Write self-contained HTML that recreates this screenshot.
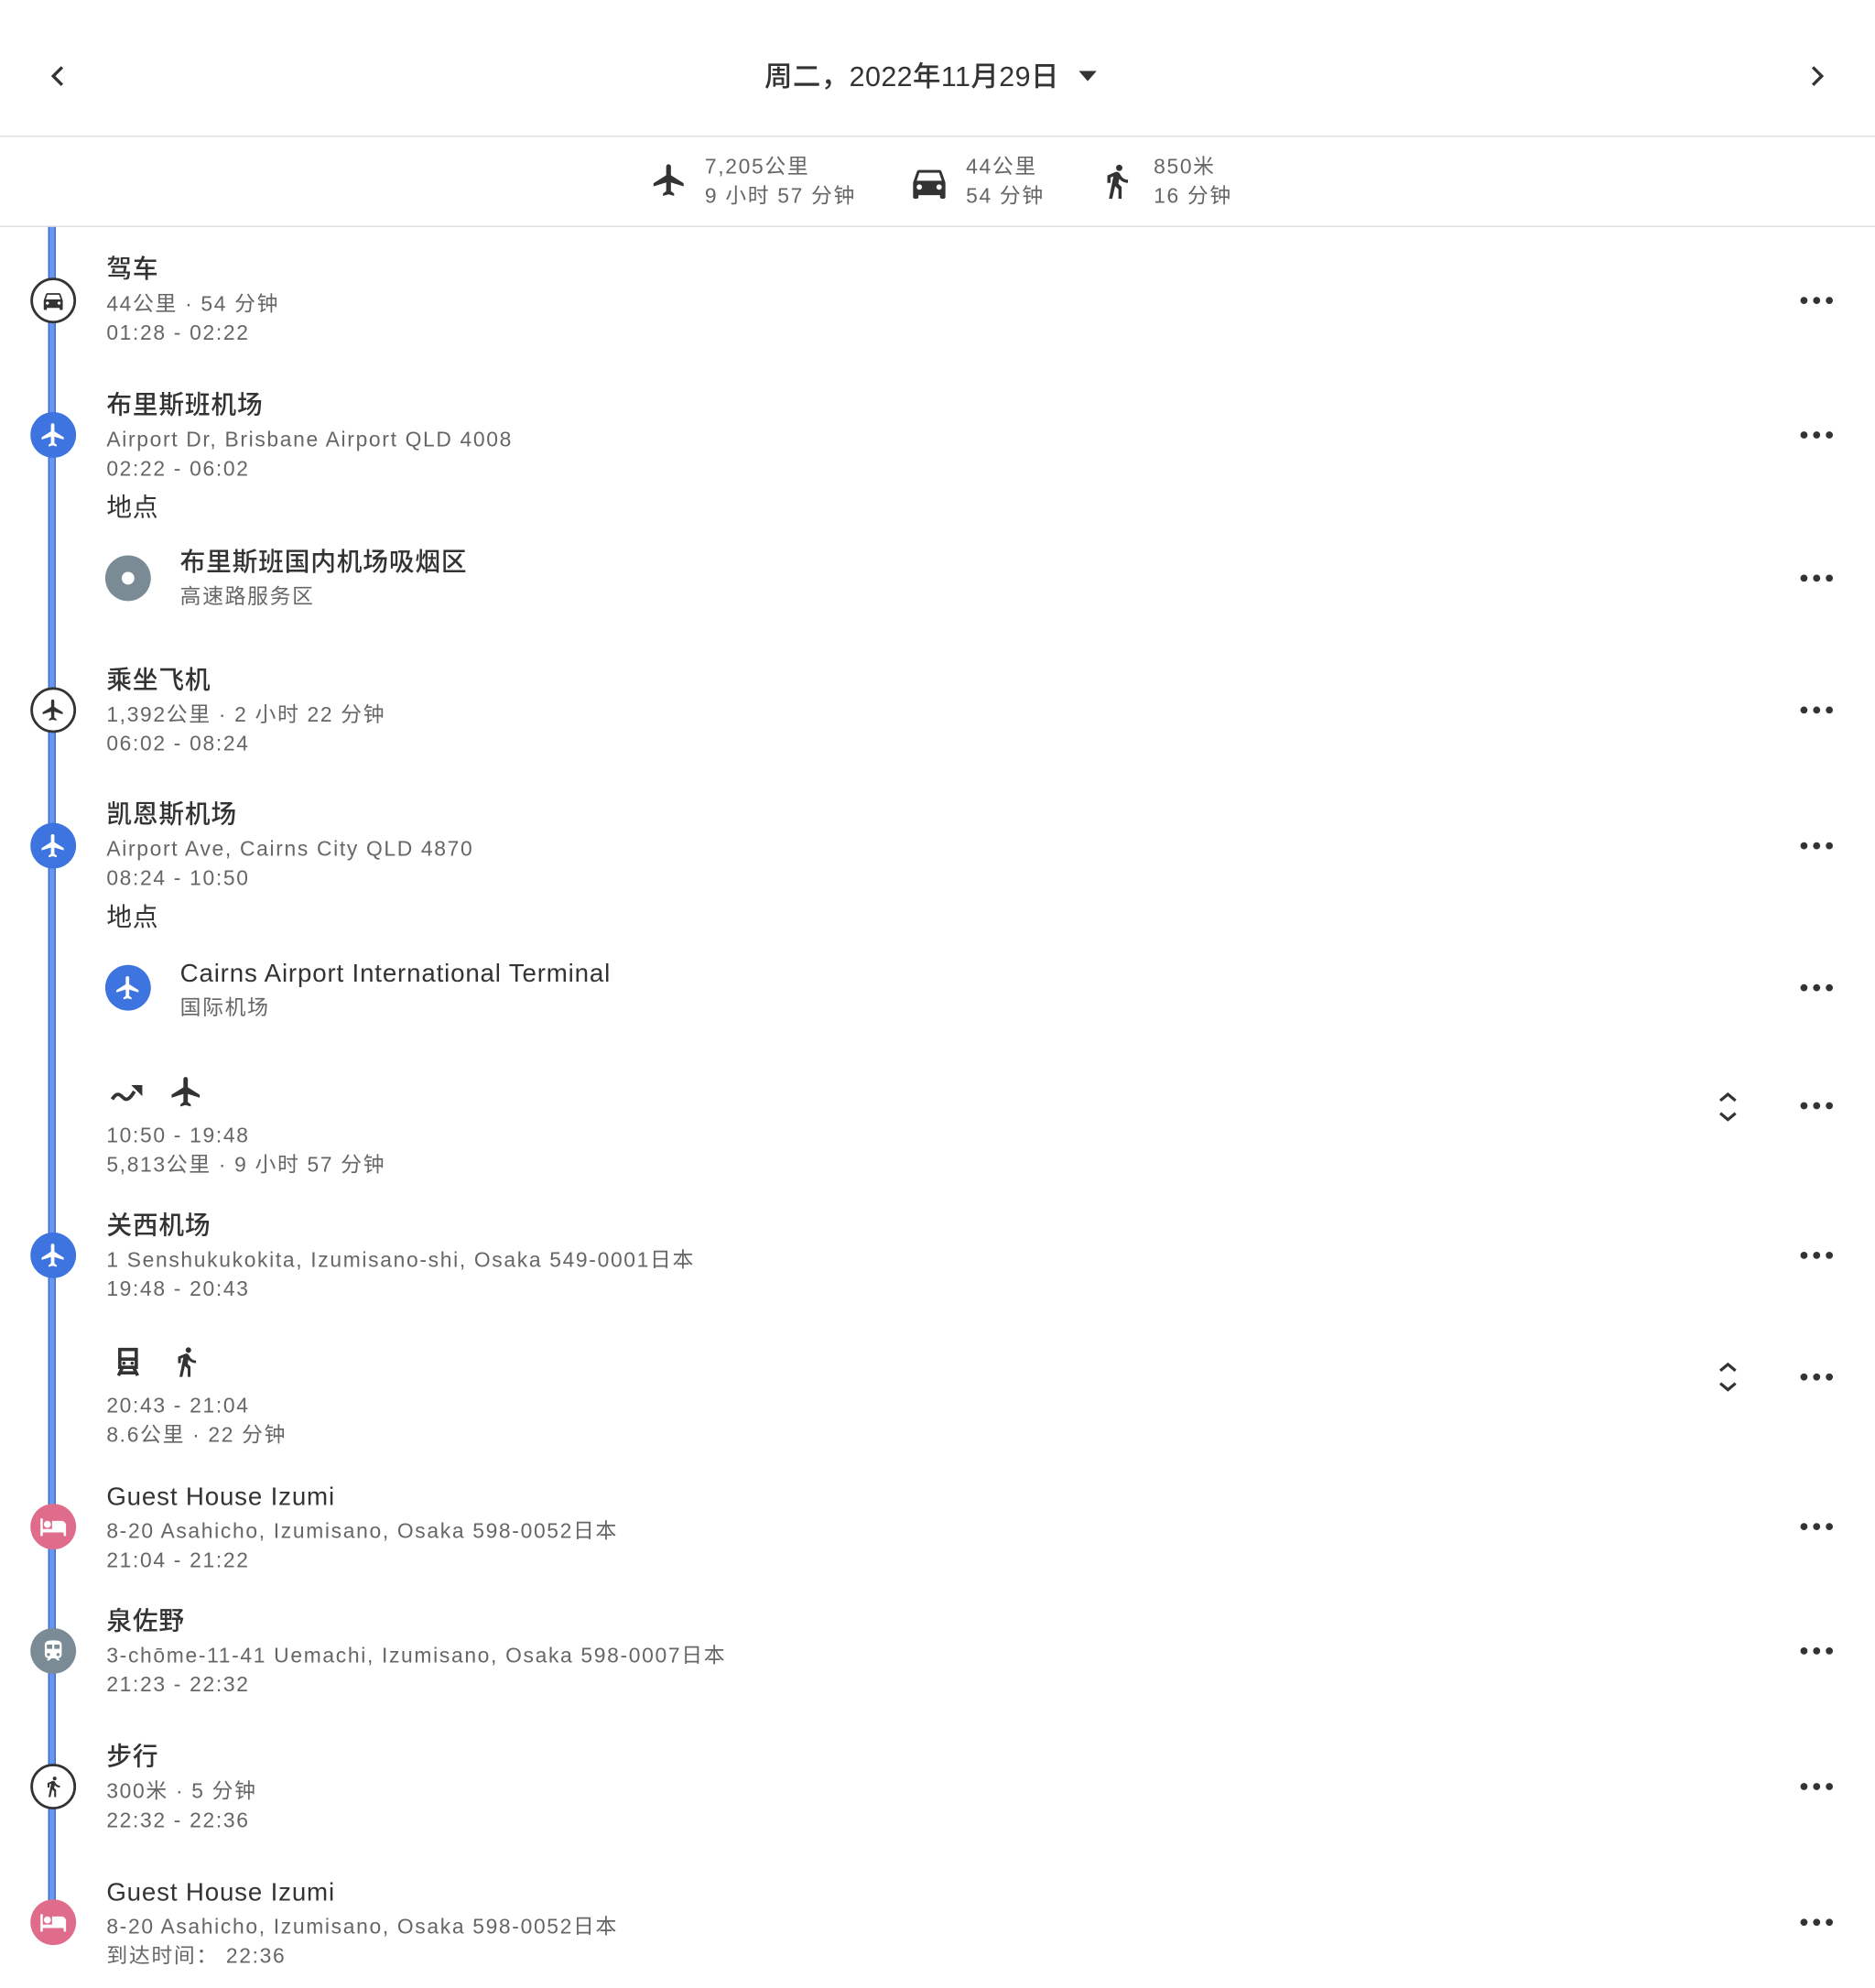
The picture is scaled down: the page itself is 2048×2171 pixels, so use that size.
<!DOCTYPE html>
<html><head><meta charset="utf-8"><style>
html,body{margin:0;padding:0;background:#fff;width:2048px;height:2171px;overflow:hidden}
#c{position:absolute;left:0;top:0;width:1479px;height:1568px;transform:scale(1.3847);transform-origin:0 0;font-family:"Liberation Sans","Noto Sans CJK SC",sans-serif}
.a{position:absolute;white-space:nowrap;line-height:24px}
.t{font-size:20px;color:#333;font-weight:500;left:84px;letter-spacing:.6px;margin-top:1px}
.s{font-size:16.5px;color:#666;letter-spacing:1.2px;left:84px;margin-top:1px}
.ic{position:absolute;width:36px;height:36px;border-radius:50%;box-sizing:border-box;display:flex;align-items:center;justify-content:center}
.o{background:#fff;border:2.5px solid #333}
.b{background:#3e74e0}
.p{background:#e06c8c}
.g{background:#7a8b95}
.dots{position:absolute;left:1420px;width:26px;height:6px}
.hl{position:absolute;left:0;width:1479px;height:1px;background:#ddd}
</style></head><body><div id="c">
<svg class="a" style="left:36px;top:50px" width="20" height="20" viewBox="0 0 20 20"><path d="M13 3L6 10l7 7" fill="none" stroke="#333" stroke-width="2.4"/></svg>
<div class="a" style="left:603px;top:47px;font-size:22px;line-height:28px;color:#333;font-weight:500;letter-spacing:.3px">周二，2022年11月29日</div>
<svg class="a" style="left:850px;top:55px" width="16" height="10"><path d="M1 1h14L8 9z" fill="#333"/></svg>
<svg class="a" style="left:1423px;top:50px" width="20" height="20" viewBox="0 0 20 20"><path d="M7 3l7 7-7 7" fill="none" stroke="#333" stroke-width="2.4"/></svg>
<div class="hl" style="top:107px"></div>
<svg class="a" style="left:513px;top:127px" width="30" height="30" viewBox="0 0 24 24"><path fill="#333" d="M21 16v-2l-8-5V3.5c0-.83-.67-1.5-1.5-1.5S10 2.67 10 3.5V9l-8 5v2l8-2.5V19l-2 1.5V22l3.5-1 3.5 1v-1.5L13 19v-5.5l8 2.5z"/></svg>
<div class="a s" style="left:556px;top:119px">7,205公里</div>
<div class="a s" style="left:556px;top:142px">9 小时 57 分钟</div>
<svg class="a" style="left:716px;top:127px" width="34" height="34" viewBox="0 0 24 24"><path fill="#333" d="M18.92 6.01C18.72 5.420 18.160 5 17.5 5h-11c-.66 0-1.21.42-1.42 1.01L3 12v8c0 .55.45 1 1 1h1c.55 0 1-.45 1-1v-1h12v1c0 .55.45 1 1 1h1c.55 0 1-.45 1-1v-8l-2.08-5.99zM6.5 16c-.83 0-1.5-.67-1.5-1.5S5.67 13 6.5 13s1.5.67 1.5 1.5S7.33 16 6.5 16zm11 0c-.83 0-1.5-.67-1.5-1.5s.67-1.5 1.5-1.5 1.5.67 1.5 1.5-.67 1.5-1.5 1.5zM5 11l1.5-4.5h11L19 11H5z"/></svg>
<div class="a s" style="left:762px;top:119px">44公里</div>
<div class="a s" style="left:762px;top:142px">54 分钟</div>
<svg class="a" style="left:866px;top:127px" width="30" height="32" viewBox="0 0 24 24"><path fill="#333" d="M13.5 5.5c1.1 0 2-.9 2-2s-.9-2-2-2-2 .9-2 2 .9 2 2 2zM9.8 8.9L7 23h2.1l1.8-8 2.1 2v6h2v-7.5l-2.1-2 .6-3C14.8 12 16.8 13 19 13v-2c-1.9 0-3.5-1-4.3-2.4l-1-1.6c-.4-.6-1-1-1.7-1-.3 0-.5.1-.8.1L6 8.3V13h2V9.6l1.8-.7"/></svg>
<div class="a s" style="left:910px;top:119px">850米</div>
<div class="a s" style="left:910px;top:142px">16 分钟</div>
<div class="hl" style="top:178px"></div>
<div style="position:absolute;left:38px;top:179px;width:6px;height:1337px;background:#6a97ee;border-left:1.5px solid #3a6ad6;border-right:1.5px solid #3a6ad6;box-sizing:border-box"></div>

<div class="ic o" style="left:24px;top:219px"><svg width="20" height="20" viewBox="0 0 24 24"><path fill="#333" d="M18.92 6.01C18.72 5.42 18.16 5 17.5 5h-11c-.66 0-1.21.42-1.42 1.01L3 12v8c0 .55.45 1 1 1h1c.55 0 1-.45 1-1v-1h12v1c0 .55.45 1 1 1h1c.55 0 1-.45 1-1v-8l-2.08-5.99zM6.5 16c-.83 0-1.5-.67-1.5-1.5S5.67 13 6.5 13s1.5.67 1.5 1.5S7.33 16 6.5 16zm11 0c-.83 0-1.5-.67-1.5-1.5s.67-1.5 1.5-1.5 1.5.67 1.5 1.5-.67 1.5-1.5 1.5zM5 11l1.5-4.5h11L19 11H5z"/></svg></div>
<div class="a t" style="top:200px">驾车</div>
<div class="a s" style="top:227px">44公里 · 54 分钟</div>
<div class="a s" style="top:250px">01:28 - 02:22</div>

<div class="ic b" style="left:24px;top:325px"><svg width="22" height="22" viewBox="0 0 24 24"><path fill="#fff" d="M21 16v-2l-8-5V3.5c0-.83-.67-1.5-1.5-1.5S10 2.67 10 3.5V9l-8 5v2l8-2.5V19l-2 1.5V22l3.5-1 3.5 1v-1.5L13 19v-5.5l8 2.5z"/></svg></div>
<div class="a t" style="top:307px">布里斯班机场</div>
<div class="a s" style="top:334px">Airport Dr, Brisbane Airport QLD 4008</div>
<div class="a s" style="top:357px">02:22 - 06:02</div>
<div class="a t" style="top:388px;font-weight:400">地点</div>
<div class="ic g" style="left:83px;top:438px"><div style="width:10px;height:10px;border-radius:50%;background:#fff"></div></div>
<div class="a t" style="left:142px;top:431px">布里斯班国内机场吸烟区</div>
<div class="a s" style="left:142px;top:458px">高速路服务区</div>

<div class="ic o" style="left:24px;top:542px"><svg width="20" height="20" viewBox="0 0 24 24"><path fill="#333" d="M21 16v-2l-8-5V3.5c0-.83-.67-1.5-1.5-1.5S10 2.67 10 3.5V9l-8 5v2l8-2.5V19l-2 1.5V22l3.5-1 3.5 1v-1.5L13 19v-5.5l8 2.5z"/></svg></div>
<div class="a t" style="top:524px">乘坐飞机</div>
<div class="a s" style="top:551px">1,392公里 · 2 小时 22 分钟</div>
<div class="a s" style="top:574px">06:02 - 08:24</div>

<div class="ic b" style="left:24px;top:649px"><svg width="22" height="22" viewBox="0 0 24 24"><path fill="#fff" d="M21 16v-2l-8-5V3.5c0-.83-.67-1.5-1.5-1.5S10 2.67 10 3.5V9l-8 5v2l8-2.5V19l-2 1.5V22l3.5-1 3.5 1v-1.5L13 19v-5.5l8 2.5z"/></svg></div>
<div class="a t" style="top:630px">凯恩斯机场</div>
<div class="a s" style="top:657px">Airport Ave, Cairns City QLD 4870</div>
<div class="a s" style="top:680px">08:24 - 10:50</div>
<div class="a t" style="top:711px;font-weight:400">地点</div>
<div class="ic b" style="left:83px;top:761px"><svg width="22" height="22" viewBox="0 0 24 24"><path fill="#fff" d="M21 16v-2l-8-5V3.5c0-.83-.67-1.5-1.5-1.5S10 2.67 10 3.5V9l-8 5v2l8-2.5V19l-2 1.5V22l3.5-1 3.5 1v-1.5L13 19v-5.5l8 2.5z"/></svg></div>
<div class="a t" style="left:142px;top:755px">Cairns Airport International Terminal</div>
<div class="a s" style="left:142px;top:782px">国际机场</div>

<svg class="a" style="left:86px;top:847px" width="30" height="30" viewBox="0 0 24 24"><path d="M2 16c3-5 5-3 7-1s4 1 7-4" fill="none" stroke="#333" stroke-width="2.2"/><path fill="#333" d="M14 7h7v7l-2.5-2.5z"/></svg>
<svg class="a" style="left:133px;top:847px" width="28" height="28" viewBox="0 0 24 24"><path fill="#333" d="M21 16v-2l-8-5V3.5c0-.83-.67-1.5-1.5-1.5S10 2.67 10 3.5V9l-8 5v2l8-2.5V19l-2 1.5V22l3.5-1 3.5 1v-1.5L13 19v-5.5l8 2.5z"/></svg>
<div class="a s" style="top:883px">10:50 - 19:48</div>
<div class="a s" style="top:906px">5,813公里 · 9 小时 57 分钟</div>
<svg class="a" style="left:1354px;top:860px" width="18" height="26"><path d="M3 8l6-5 6 5M3 18l6 5 6-5" fill="none" stroke="#333" stroke-width="2.3"/></svg>

<div class="ic b" style="left:24px;top:972px"><svg width="22" height="22" viewBox="0 0 24 24"><path fill="#fff" d="M21 16v-2l-8-5V3.5c0-.83-.67-1.5-1.5-1.5S10 2.67 10 3.5V9l-8 5v2l8-2.5V19l-2 1.5V22l3.5-1 3.5 1v-1.5L13 19v-5.5l8 2.5z"/></svg></div>
<div class="a t" style="top:954px">关西机场</div>
<div class="a s" style="top:981px">1 Senshukukokita, Izumisano-shi, Osaka 549-0001日本</div>
<div class="a s" style="top:1004px">19:48 - 20:43</div>

<svg class="a" style="left:88px;top:1061px" width="26" height="26" viewBox="0 0 24 24"><path fill="none" stroke="#333" stroke-width="2.4" d="M6 3h12v13H6z M6 10h12"/><circle cx="9" cy="13" r="1.2" fill="#333"/><circle cx="15" cy="13" r="1.2" fill="#333"/><path d="M8 16l-3 6M16 16l3 6M6.5 20h11" stroke="#333" stroke-width="2.4" fill="none"/></svg>
<svg class="a" style="left:134px;top:1060px" width="26" height="28" viewBox="0 0 24 24"><path fill="#333" d="M13.5 5.5c1.1 0 2-.9 2-2s-.9-2-2-2-2 .9-2 2 .9 2 2 2zM9.8 8.9L7 23h2.1l1.8-8 2.1 2v6h2v-7.5l-2.1-2 .6-3C14.8 12 16.8 13 19 13v-2c-1.9 0-3.5-1-4.3-2.4l-1-1.6c-.4-.6-1-1-1.7-1-.3 0-.5.1-.8.1L6 8.3V13h2V9.6l1.8-.7"/></svg>
<div class="a s" style="top:1096px">20:43 - 21:04</div>
<div class="a s" style="top:1119px">8.6公里 · 22 分钟</div>
<svg class="a" style="left:1354px;top:1073px" width="18" height="26"><path d="M3 8l6-5 6 5M3 18l6 5 6-5" fill="none" stroke="#333" stroke-width="2.3"/></svg>

<div class="ic p" style="left:24px;top:1186px"><svg width="22" height="22" viewBox="0 0 24 24"><path fill="#fff" d="M7 13c1.66 0 3-1.34 3-3S8.66 7 7 7s-3 1.34-3 3 1.34 3 3 3zm12-6h-8v7H3V5H1v15h2v-3h18v3h2v-9c0-2.21-1.79-4-4-4z"/></svg></div>
<div class="a t" style="top:1168px">Guest House Izumi</div>
<div class="a s" style="top:1195px">8-20 Asahicho, Izumisano, Osaka 598-0052日本</div>
<div class="a s" style="top:1218px">21:04 - 21:22</div>

<div class="ic g" style="left:24px;top:1284px"><svg width="20" height="20" viewBox="0 0 24 24"><path fill="#fff" d="M12 2c-4 0-8 .5-8 4v9.5C4 17.43 5.57 19 7.5 19L6 20.5v.5h2.23l2-2H14l2 2h2v-.5L16.5 19c1.93 0 3.5-1.57 3.5-3.5V6c0-3.5-3.58-4-8-4zM7.5 17c-.83 0-1.5-.67-1.5-1.5S6.67 14 7.5 14s1.5.67 1.5 1.5S8.33 17 7.5 17zm3.5-7H6V6h5v4zm2 0V6h5v4h-5zm3.5 7c-.83 0-1.5-.67-1.5-1.5s.67-1.5 1.5-1.5 1.5.67 1.5 1.5-.67 1.5-1.5 1.5z"/></svg></div>
<div class="a t" style="top:1266px">泉佐野</div>
<div class="a s" style="top:1293px">3-chōme-11-41 Uemachi, Izumisano, Osaka 598-0007日本</div>
<div class="a s" style="top:1316px">21:23 - 22:32</div>

<div class="ic o" style="left:24px;top:1391px"><svg width="18" height="18" viewBox="0 0 24 24"><path fill="#333" d="M13.5 5.5c1.1 0 2-.9 2-2s-.9-2-2-2-2 .9-2 2 .9 2 2 2zM9.8 8.9L7 23h2.1l1.8-8 2.1 2v6h2v-7.5l-2.1-2 .6-3C14.8 12 16.8 13 19 13v-2c-1.9 0-3.5-1-4.3-2.4l-1-1.6c-.4-.6-1-1-1.7-1-.3 0-.5.1-.8.1L6 8.3V13h2V9.6l1.8-.7"/></svg></div>
<div class="a t" style="top:1373px">步行</div>
<div class="a s" style="top:1400px">300米 · 5 分钟</div>
<div class="a s" style="top:1423px">22:32 - 22:36</div>

<div class="ic p" style="left:24px;top:1498px"><svg width="22" height="22" viewBox="0 0 24 24"><path fill="#fff" d="M7 13c1.66 0 3-1.34 3-3S8.66 7 7 7s-3 1.34-3 3 1.34 3 3 3zm12-6h-8v7H3V5H1v15h2v-3h18v3h2v-9c0-2.21-1.79-4-4-4z"/></svg></div>
<div class="a t" style="top:1480px">Guest House Izumi</div>
<div class="a s" style="top:1507px">8-20 Asahicho, Izumisano, Osaka 598-0052日本</div>
<div class="a s" style="top:1530px">到达时间： 22:36</div>

<svg class="dots" style="top:234px" viewBox="0 0 26 6"><circle cx="3" cy="3" r="2.8" fill="#333"/><circle cx="13" cy="3" r="2.8" fill="#333"/><circle cx="23" cy="3" r="2.8" fill="#333"/></svg>
<svg class="dots" style="top:340px" viewBox="0 0 26 6"><circle cx="3" cy="3" r="2.8" fill="#333"/><circle cx="13" cy="3" r="2.8" fill="#333"/><circle cx="23" cy="3" r="2.8" fill="#333"/></svg>
<svg class="dots" style="top:453px" viewBox="0 0 26 6"><circle cx="3" cy="3" r="2.8" fill="#333"/><circle cx="13" cy="3" r="2.8" fill="#333"/><circle cx="23" cy="3" r="2.8" fill="#333"/></svg>
<svg class="dots" style="top:557px" viewBox="0 0 26 6"><circle cx="3" cy="3" r="2.8" fill="#333"/><circle cx="13" cy="3" r="2.8" fill="#333"/><circle cx="23" cy="3" r="2.8" fill="#333"/></svg>
<svg class="dots" style="top:664px" viewBox="0 0 26 6"><circle cx="3" cy="3" r="2.8" fill="#333"/><circle cx="13" cy="3" r="2.8" fill="#333"/><circle cx="23" cy="3" r="2.8" fill="#333"/></svg>
<svg class="dots" style="top:776px" viewBox="0 0 26 6"><circle cx="3" cy="3" r="2.8" fill="#333"/><circle cx="13" cy="3" r="2.8" fill="#333"/><circle cx="23" cy="3" r="2.8" fill="#333"/></svg>
<svg class="dots" style="top:869px" viewBox="0 0 26 6"><circle cx="3" cy="3" r="2.8" fill="#333"/><circle cx="13" cy="3" r="2.8" fill="#333"/><circle cx="23" cy="3" r="2.8" fill="#333"/></svg>
<svg class="dots" style="top:987px" viewBox="0 0 26 6"><circle cx="3" cy="3" r="2.8" fill="#333"/><circle cx="13" cy="3" r="2.8" fill="#333"/><circle cx="23" cy="3" r="2.8" fill="#333"/></svg>
<svg class="dots" style="top:1083px" viewBox="0 0 26 6"><circle cx="3" cy="3" r="2.8" fill="#333"/><circle cx="13" cy="3" r="2.8" fill="#333"/><circle cx="23" cy="3" r="2.8" fill="#333"/></svg>
<svg class="dots" style="top:1201px" viewBox="0 0 26 6"><circle cx="3" cy="3" r="2.8" fill="#333"/><circle cx="13" cy="3" r="2.8" fill="#333"/><circle cx="23" cy="3" r="2.8" fill="#333"/></svg>
<svg class="dots" style="top:1299px" viewBox="0 0 26 6"><circle cx="3" cy="3" r="2.8" fill="#333"/><circle cx="13" cy="3" r="2.8" fill="#333"/><circle cx="23" cy="3" r="2.8" fill="#333"/></svg>
<svg class="dots" style="top:1406px" viewBox="0 0 26 6"><circle cx="3" cy="3" r="2.8" fill="#333"/><circle cx="13" cy="3" r="2.8" fill="#333"/><circle cx="23" cy="3" r="2.8" fill="#333"/></svg>
<svg class="dots" style="top:1513px" viewBox="0 0 26 6"><circle cx="3" cy="3" r="2.8" fill="#333"/><circle cx="13" cy="3" r="2.8" fill="#333"/><circle cx="23" cy="3" r="2.8" fill="#333"/></svg>
</div></body></html>
